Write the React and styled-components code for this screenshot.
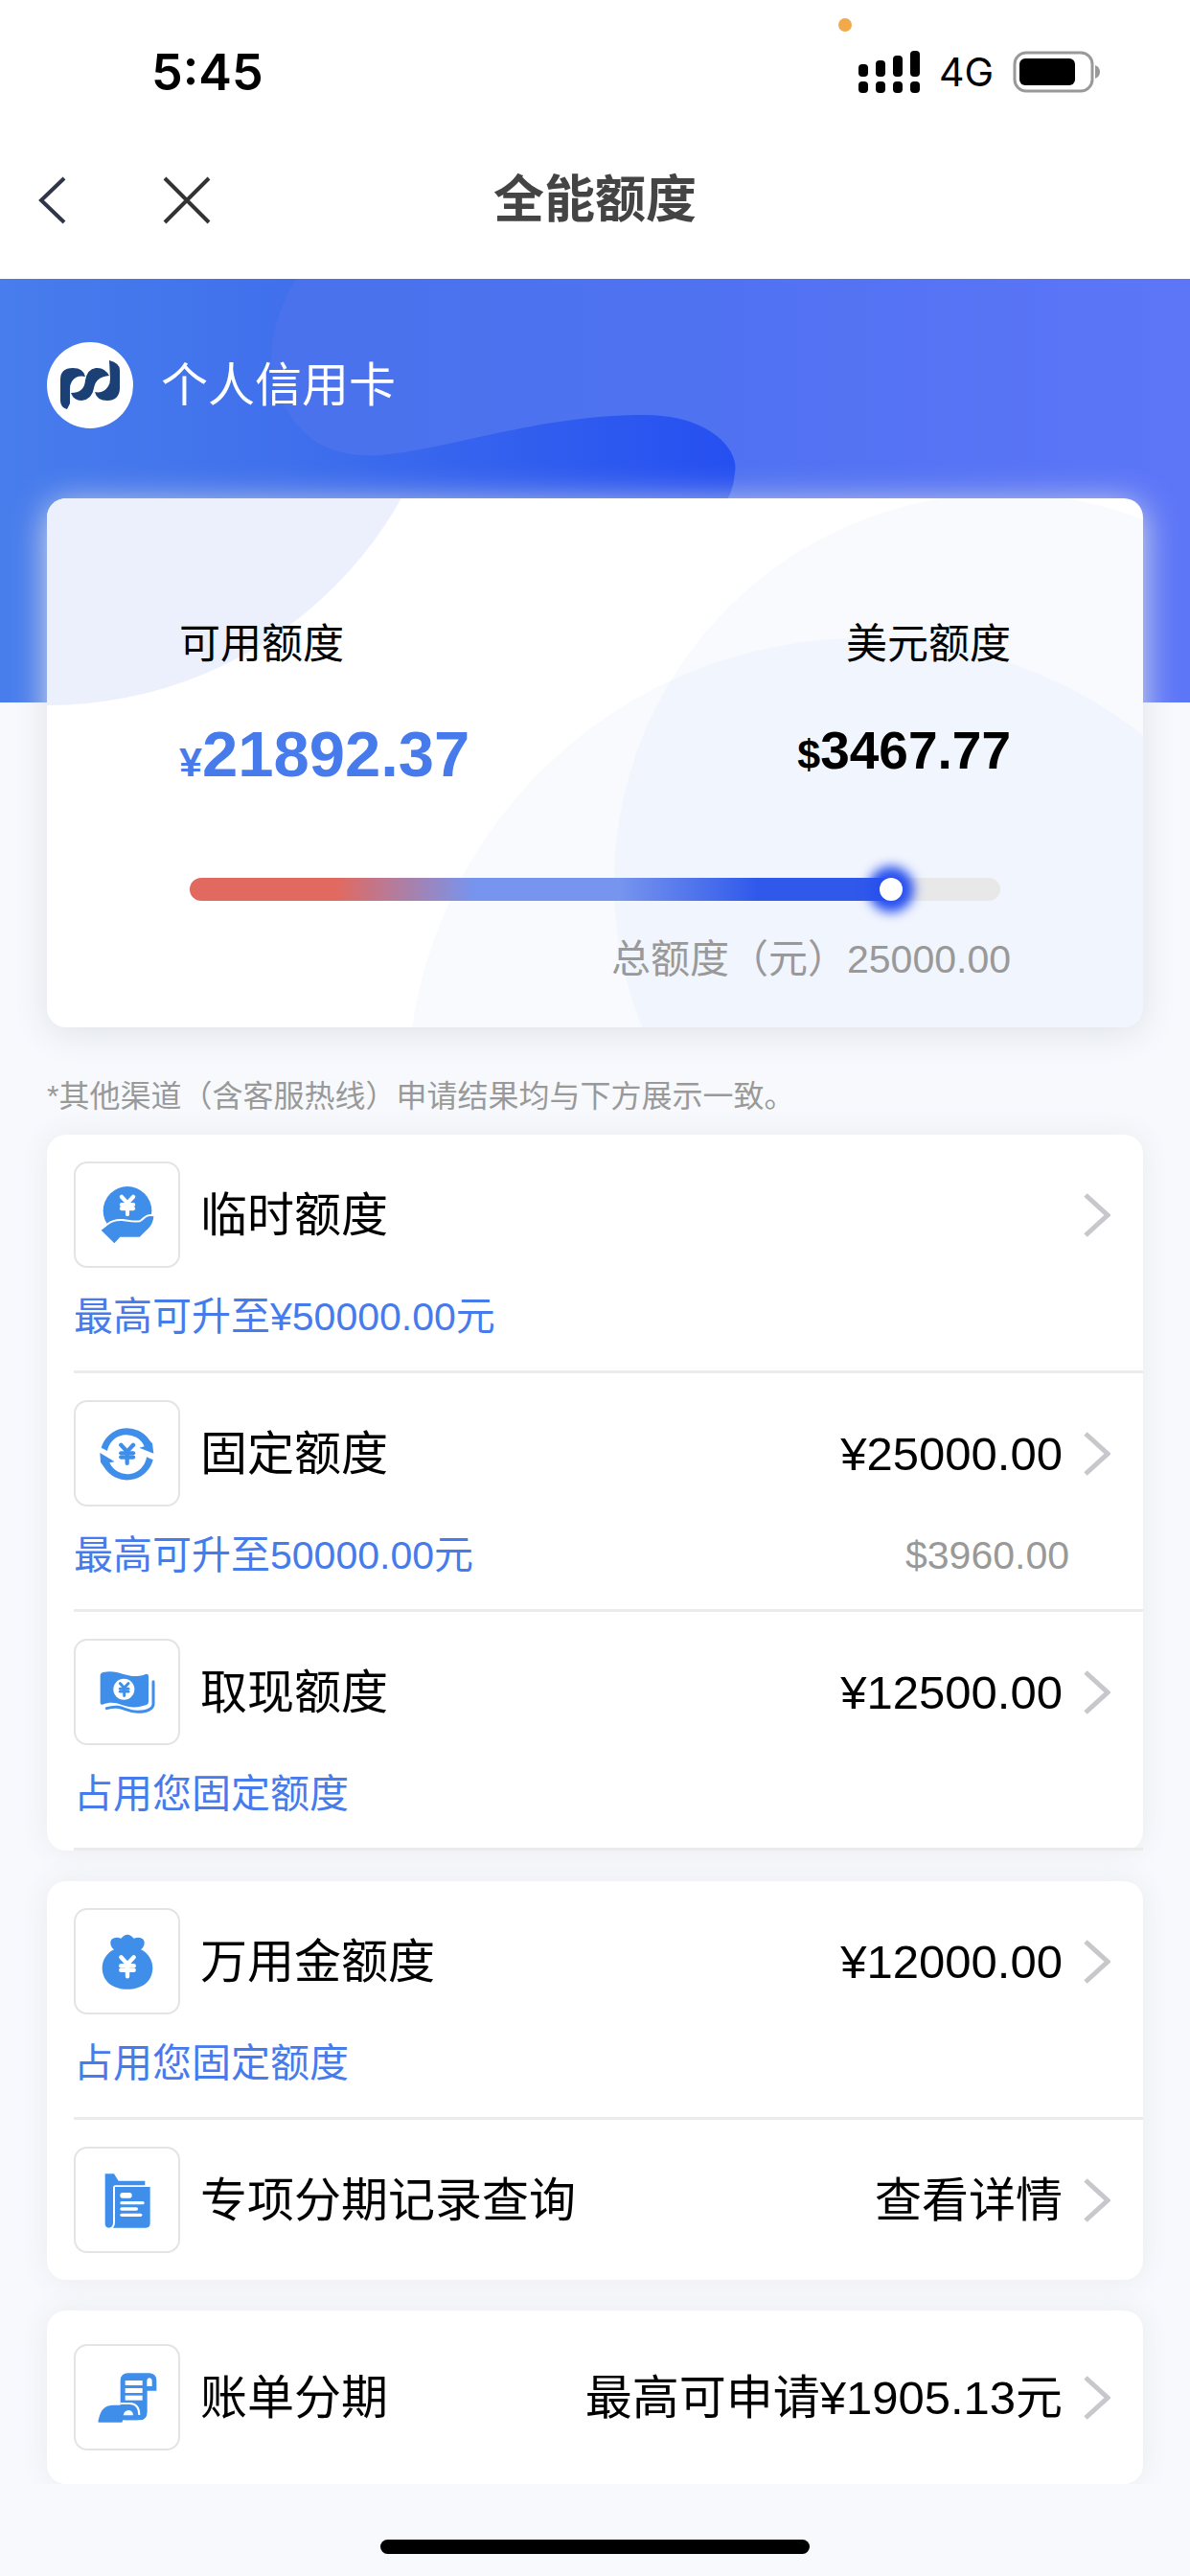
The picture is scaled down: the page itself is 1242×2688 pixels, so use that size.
import styled, { createGlobalStyle } from 'styled-components';
import { JapaneseYen } from 'lucide-react';

const GlobalStyle = createGlobalStyle`
    * {
        box-sizing: border-box;
    }
    body {
        margin: 0;
        background: #f7f9fd;
        color: #000;
        font-family: "Liberation Sans", "Noto Sans CJK SC", sans-serif;
    }
    button {
        margin: 0;
        padding: 0;
        border: 0;
        background: none;
        color: inherit;
        font: inherit;
        text-align: left;
        cursor: pointer;
    }
    svg {
        display: block;
        flex-shrink: 0;
    }
`;

const Page = styled.div`
    min-height: 100vh;
    display: flex;
    flex-direction: column;
    justify-content: space-between;
`;

const Header = styled.header`
    background: #fff;
`;

const StatusBar = styled.div`
    position: relative;
    display: flex;
    align-items: center;
    justify-content: space-between;
    height: 130px;
    padding: 20px 94px 0 158px;
    font-family: Inter, sans-serif;
`;

const Clock = styled.span`
    font-size: 52px;
    font-weight: 600;
`;

const StatusIcons = styled.div`
    display: flex;
    align-items: center;
    gap: 20px;
    font-size: 41px;
`;

const RecordingDot = styled.span`
    position: absolute;
    top: 19px;
    right: 353px;
    width: 14px;
    height: 14px;
    border-radius: 50%;
    background: #f2a94a;
`;

const NavBar = styled.nav`
    display: grid;
    grid-template-columns: 1fr auto 1fr;
    align-items: center;
    height: 161px;
    padding: 0 40px 4px;
    color: #333;
`;

const NavButtons = styled.div`
    display: flex;
    gap: 100px;
`;

const Title = styled.h1`
    margin: 0;
    color: #444;
    font-size: 53px;
    font-weight: 600;
    line-height: 72px;
`;

const Content = styled.main`
    overflow: hidden;
`;

const Hero = styled.section`
    position: relative;
    padding: 66px 49px 0;
`;

const HeroBackground = styled.svg`
    position: absolute;
    top: 0;
    left: 0;
    width: 100%;
    height: 442px;
`;

const Owner = styled.div`
    position: relative;
    display: flex;
    align-items: center;
    gap: 29px;
    color: #fff;
    font-size: 49px;
    line-height: 72px;
`;

const LimitCard = styled.div`
    position: relative;
    margin-top: 73px;
    padding: 124px 138px 43px;
    border-radius: 20px;
    background: #fff;
    box-shadow: 0 6px 36px #dfe2e6;
`;

const CardBackground = styled.svg`
    position: absolute;
    inset: 0;
    width: 100%;
    height: 100%;
    border-radius: 20px;
`;

const Amounts = styled.div`
    position: relative;
    display: flex;
    justify-content: space-between;
    align-items: flex-start;
`;

const Amount = styled.div`
    display: flex;
    flex-direction: column;
    gap: 47px;
    text-align: ${props => props.$end ? 'right' : 'left'};
`;

const AmountLabel = styled.span`
    font-size: 43px;
    line-height: 56px;
`;

const AmountValue = styled.strong`
    color: ${props => props.$main ? '#477bec' : '#000'};
    font-size: ${props => props.$main ? 67 : 55}px;
    line-height: ${props => props.$main ? 80 : 72}px;
    small {
        font-size: 43px;
    }
`;

const Slider = styled.input`
    position: relative;
    display: block;
    appearance: none;
    width: calc(100% - 22px);
    height: 24px;
    margin: 81px 11px 33px;
    border-radius: 12px;
    background: linear-gradient(
        to right,
        #e2695f 18%,
        #7794ee 35%,
        #7794ee 53%,
        #3059eb 70%,
        #3059eb 87%,
        #e8e8e8 87%
    );
    &::-webkit-slider-thumb {
        appearance: none;
        width: 24px;
        height: 24px;
        border-radius: 50%;
        background: #fff;
        box-shadow: 0 0 12px 12px #2851ee;
    }
`;

const Total = styled.div`
    position: relative;
    color: #999;
    font-size: 41px;
    line-height: 56px;
    text-align: right;
`;

const Note = styled.p`
    margin: 48px 49px 16px;
    color: #999;
    font-size: 32px;
    line-height: 48px;
`;

const Lists = styled.div`
    display: flex;
    flex-direction: column;
    gap: 32px;
    padding: 0 49px;
`;

const List = styled.ul`
    margin: 0;
    padding: 0 0 0 28px;
    list-style: none;
    border-radius: 20px;
    background: #fff;
    box-shadow: 0 0 30px #eaebee;
`;

const Item = styled.li`
    border-bottom: ${props => props.$line ? '3px solid #ebebec' : '0'};
`;

const Row = styled.button`
    display: block;
    width: 100%;
    padding: ${props => props.$roomy ? '35px 0' : '28px 0'};
`;

const RowHead = styled.div`
    display: flex;
    align-items: center;
    padding-right: 34px;
    font-size: 49px;
    line-height: 72px;
`;

const IconBox = styled.span`
    display: flex;
    align-items: center;
    justify-content: center;
    flex-shrink: 0;
    width: 111px;
    height: 111px;
    margin-right: 21px;
    border: 2px solid #e4e4e5;
    border-radius: 14px;
`;

const RowValue = styled.span`
    margin-left: auto;
    margin-right: 22px;
`;

const RowFoot = styled.div`
    display: flex;
    justify-content: space-between;
    margin-top: 23px;
    padding-right: 77px;
    color: #477bec;
    font-size: 41px;
    line-height: 56px;
`;

const Muted = styled.span`
    color: #999;
`;

const HomeIndicator = styled.div`
    align-self: center;
    width: 36%;
    height: 15px;
    margin: 55px 0 23px;
    border-radius: 8px;
    background: #000;
`;

const BLUE = '#3f8fea';

const Yen = ({ cx, cy, size, color = '#fff', weight = 4 }) => (
    <JapaneseYen x={cx - size / 2} y={cy - size / 2} size={size} color={color} strokeWidth={weight} />
);

const IconSvg = ({ cy, children }) => (
    <svg width="66" height="66" viewBox={`119 ${cy - 99} 198 198`} fill={BLUE} aria-hidden="true">
        {children}
    </svg>
);

const HandCoinIcon = () => (
    <IconSvg cy={230}>
        <circle cx="218" cy="216" r="76" />
        <path
            d="M136 277L158 260Q176 246 202 248L230 252Q247 253 257 252C270 246 274 233 290 233L300 234Q299 256 282 273L256 298H195L177 318Z"
            stroke="#fff"
            strokeWidth="12"
            paintOrder="stroke"
        />
        <Yen cx={218} cy={200} size={74} />
    </IconSvg>
);

const ExchangeIcon = () => (
    <IconSvg cy={222}>
        <path d="M136 203A84 84 0 0 1 288 181L296 190L300 221L255 203L271 199A61 61 0 0 0 155 213Z" />
        <path d="M298 241A84 84 0 0 1 145 264L134 248L132 219L178 247L162 250A61 61 0 0 0 278 232Z" />
        <Yen cx={217} cy={223} size={77} color={BLUE} />
    </IconSvg>
);

const BanknoteIcon = () => (
    <IconSvg cy={218}>
        <path d="M133 165Q133 157 142 155C188 145 208 170 250 167Q266 165 277 160Q284 160 284 167V248Q284 255 277 257C250 267 226 266 200 257C178 248 160 249 140 256Q133 257 133 251Z" />
        <circle cx="207" cy="208" r="33" fill="#fff" />
        <path d="M153 268C200 254 210 278 250 279C282 279 299 268 299 254V184" fill="none" stroke={BLUE} strokeWidth="9" strokeLinecap="round" />
        <Yen cx={208} cy={209} size={52} color={BLUE} />
    </IconSvg>
);

const MoneyBagIcon = () => (
    <IconSvg cy={223}>
        <path d="M176 185C166 178 160 162 170 152Q180 144 198 150Q208 138 218 138Q228 138 238 150Q256 144 266 152C276 162 270 178 260 185C284 196 297 220 297 243C296 286 262 309 218 309C174 309 140 286 139 243C139 220 152 196 176 185Z" />
        <Yen cx={218} cy={239} size={80} />
    </IconSvg>
);

const FolderIcon = () => (
    <IconSvg cy={218}>
        <path d="M148 135H176L190 157H273V171H180Q173 171 173 179V290Q171 304 160 304Q148 304 148 291Z" />
        <path d="M179 176H289V290Q289 304 276 304H173Q179 299 179 288Z" />
        <g fill="#fff">
            <rect x="195" y="194" width="37" height="17" rx="8" />
            <rect x="195" y="221" width="76" height="10" rx="5" />
            <rect x="195" y="240" width="56" height="10" rx="5" />
            <rect x="195" y="259" width="69" height="10" rx="5" />
        </g>
    </IconSvg>
);

const ReceiptIcon = () => (
    <IconSvg cy={222}>
        <path d="M196 250V168Q197 145 220 145H287Q309 147 309 168V200H280V266Q279 292 256 292H210Z" />
        <g fill="#fff">
            <rect x="211" y="168" width="54" height="15" />
            <rect x="211" y="192" width="54" height="15" />
            <rect x="211" y="215" width="54" height="15" />
            <path d="M279 186V167Q281 160 287 160Q294 161 295 168V186Z" />
        </g>
        <path d="M127 299Q125 297 128 288C136 256 149 245 175 245H218C240 246 250 258 250 282V292H204L201 299Z" />
        <path d="M196 240H226C246 241 255 254 255 276" fill="none" stroke="#fff" strokeWidth="6" />
        <path d="M205 277Q208 262 222 261Q235 262 236 277Z" fill="#fff" />
    </IconSvg>
);

const Chevron = () => (
    <svg width="28" height="46" viewBox="0 0 28 46" fill="none" stroke="#c7c7cc" strokeWidth="5" aria-hidden="true">
        <path d="M2 2L25 23L2 44" />
    </svg>
);

const BankLogo = () => (
    <svg width="90" height="90" viewBox="0 0 90 90" role="img" aria-label="logo">
        <circle cx="45" cy="45" r="45" fill="#fff" />
        <g fill="#1a4075">
            <path d="M14 39Q14 27 27 27Q38 27 40 36Q31 34 26 41Q24 44 24 49V64L21 70Q14 68 14 61Z" />
            <path d="M65 35Q60 26 51 27Q42 28 40 40Q39 53 25 53Q28 61 36 61Q47 60 49 48Q51 36 65 35Z" />
            <path d="M65 19Q76 22 76 29V49Q75 61 63 61Q52 61 50 52Q59 54 64 46Q66 43 66 38Z" />
        </g>
    </svg>
);

const Signal = () => (
    <svg width="64" height="45" viewBox="0 0 64 45" aria-hidden="true">
        {[14, 10, 5, 0].map((top, i) => (
            <g key={top}>
                <rect x={i * 18} y={top} width="10" height={27 - top} rx="4" />
                <rect x={i * 18} y="32" width="10" height="12" rx="4" />
            </g>
        ))}
    </svg>
);

const Battery = () => (
    <svg width="91" height="44" viewBox="0 0 91 44" aria-hidden="true">
        <rect x="2" y="2" width="81" height="40" rx="12" fill="none" stroke="#999" strokeWidth="3" />
        <rect x="7" y="8" width="58" height="28" rx="6" />
        <path d="M86 15Q91 17 91 22Q91 27 86 29Z" fill="#999" />
    </svg>
);

const groups = [
    [
        { title: '临时额度', icon: <HandCoinIcon />, hint: '最高可升至¥50000.00元' },
        { title: '固定额度', icon: <ExchangeIcon />, value: '¥25000.00', hint: '最高可升至50000.00元', extra: '$3960.00' },
        { title: '取现额度', icon: <BanknoteIcon />, value: '¥12500.00', hint: '占用您固定额度', line: true },
    ],
    [
        { title: '万用金额度', icon: <MoneyBagIcon />, value: '¥12000.00', hint: '占用您固定额度' },
        { title: '专项分期记录查询', icon: <FolderIcon />, value: '查看详情' },
    ],
    [
        { title: '账单分期', icon: <ReceiptIcon />, value: '最高可申请¥1905.13元' },
    ],
];

const App = () => {
    return (
        <Page>
            <GlobalStyle />
            <div>
                <Header>
                    <StatusBar>
                        <Clock>5:45</Clock>
                        <RecordingDot />
                        <StatusIcons>
                            <Signal />
                            <span>4G</span>
                            <Battery />
                        </StatusIcons>
                    </StatusBar>
                    <NavBar>
                        <NavButtons>
                            <button aria-label="返回">
                                <svg width="30" height="50" viewBox="0 0 30 50" fill="none" stroke="#2f3648" strokeWidth="4">
                                    <path d="M27 2L3 25L27 48" />
                                </svg>
                            </button>
                            <button aria-label="关闭">
                                <svg width="50" height="50" viewBox="0 0 50 50" fill="none" stroke="#333" strokeWidth="4">
                                    <path d="M2 2L48 48M48 2L2 48" />
                                </svg>
                            </button>
                        </NavButtons>
                        <Title>全能额度</Title>
                    </NavBar>
                </Header>

                <Content>
                    <Hero>
                        <HeroBackground viewBox="0 0 1242 442" preserveAspectRatio="none" aria-hidden="true">
                            <defs>
                                <linearGradient id="heroBase">
                                    <stop offset="0" stopColor="#487dec" />
                                    <stop offset="0.24" stopColor="#4070ec" />
                                    <stop offset="0.62" stopColor="#264ff1" />
                                </linearGradient>
                                <linearGradient id="heroWave">
                                    <stop offset="0" stopColor="#4972ec" />
                                    <stop offset="0.5" stopColor="#5072f2" />
                                    <stop offset="1" stopColor="#5d76f8" />
                                </linearGradient>
                            </defs>
                            <rect width="1242" height="442" fill="url(#heroBase)" />
                            <path
                                d="M309 0C276 54 276 110 301 139C320 172 350 186 396 184C470 178 560 142 673 142C740 142 772 178 767 202C766 214 764 222 756 236V442H1242V0Z"
                                fill="url(#heroWave)"
                            />
                        </HeroBackground>
                        <Owner>
                            <BankLogo />
                            <span>个人信用卡</span>
                        </Owner>
                        <LimitCard>
                            <CardBackground viewBox="0 0 1144 552" preserveAspectRatio="none" aria-hidden="true">
                                <circle cx="1" cy="-207" r="423" fill="#ecf0fc" />
                                <g fill="#a8c0f4" fillOpacity="0.08">
                                    <circle cx="998" cy="401" r="406" />
                                    <circle cx="851" cy="621" r="475" />
                                </g>
                            </CardBackground>
                            <Amounts>
                                <Amount>
                                    <AmountLabel>可用额度</AmountLabel>
                                    <AmountValue $main><small>¥</small>21892.37</AmountValue>
                                </Amount>
                                <Amount $end>
                                    <AmountLabel>美元额度</AmountLabel>
                                    <AmountValue><small>$</small>3467.77</AmountValue>
                                </Amount>
                            </Amounts>
                            <Slider type="range" min="0" max="25000" step="any" defaultValue="21892.37" aria-label="可用额度" />
                            <Total>总额度（元）25000.00</Total>
                        </LimitCard>
                    </Hero>

                    <Note>*其他渠道（含客服热线）申请结果均与下方展示一致。</Note>

                    <Lists>
                        {groups.map((items, g) => (
                            <List key={g}>
                                {items.map((item, i) => (
                                    <Item key={item.title} $line={item.line || i < items.length - 1}>
                                        <Row $roomy={items.length === 1}>
                                            <RowHead>
                                                <IconBox>{item.icon}</IconBox>
                                                <span>{item.title}</span>
                                                <RowValue>{item.value}</RowValue>
                                                <Chevron />
                                            </RowHead>
                                            {item.hint &&
                                            <RowFoot>
                                                <span>{item.hint}</span>
                                                {item.extra && <Muted>{item.extra}</Muted>}
                                            </RowFoot>
                                            }
                                        </Row>
                                    </Item>
                                ))}
                            </List>
                        ))}
                    </Lists>
                </Content>
            </div>
            <HomeIndicator />
        </Page>
    );
};

export default App;
